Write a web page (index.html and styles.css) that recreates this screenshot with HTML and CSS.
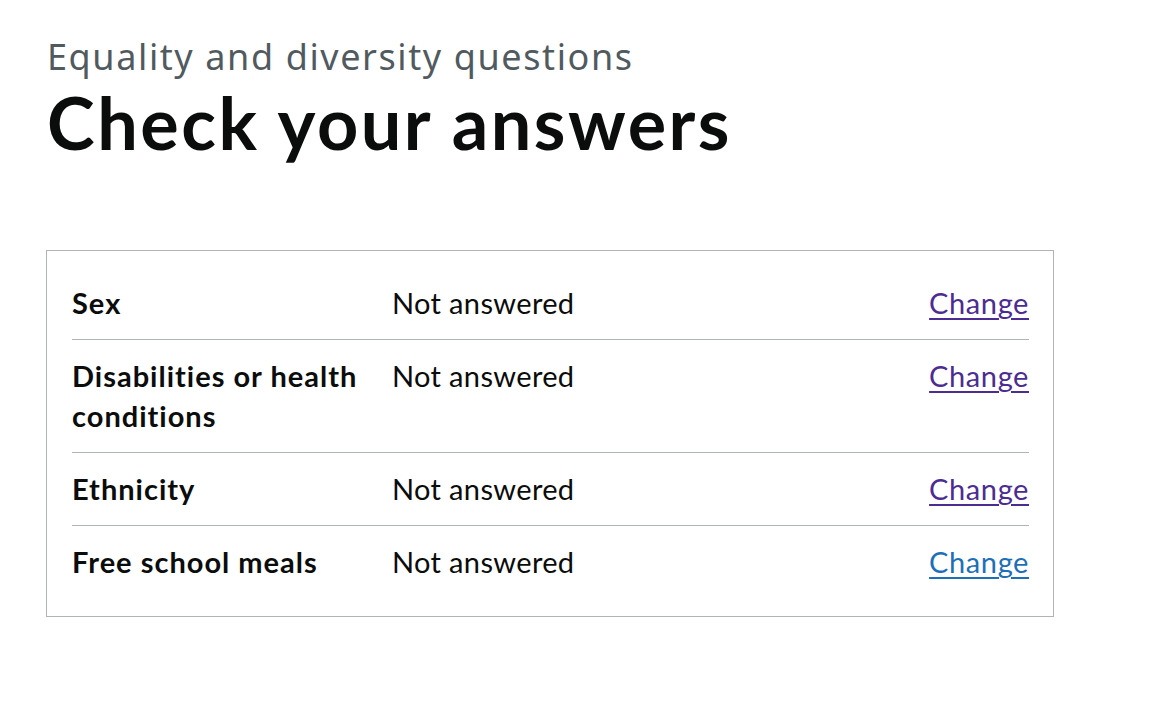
FILE: index.html
```html
<!DOCTYPE html>
<html lang="en">
<head>
<meta charset="utf-8">
<title>Check your answers</title>
<link rel="stylesheet" href="styles.css">
</head>
<body>
<main class="page">
  <span class="caption">Equality and diversity questions</span>
  <h1 class="heading">Check your answers</h1>
  <div class="card">
    <dl class="summary">
      <div class="row">
        <dt class="key">Sex</dt>
        <dd class="value">Not answered</dd>
        <dd class="actions"><a class="link visited" href="#">Change</a></dd>
      </div>
      <div class="row">
        <dt class="key">Disabilities or health conditions</dt>
        <dd class="value">Not answered</dd>
        <dd class="actions"><a class="link visited" href="#">Change</a></dd>
      </div>
      <div class="row">
        <dt class="key">Ethnicity</dt>
        <dd class="value">Not answered</dd>
        <dd class="actions"><a class="link visited" href="#">Change</a></dd>
      </div>
      <div class="row">
        <dt class="key">Free school meals</dt>
        <dd class="value">Not answered</dd>
        <dd class="actions"><a class="link" href="#">Change</a></dd>
      </div>
    </dl>
  </div>
</main>
</body>
</html>
```

FILE: styles.css
```css
html, body {
  margin: 0;
  padding: 0;
  background: #ffffff;
}

body {
  font-family: Lato, "Noto Sans", "Liberation Sans", sans-serif;
  color: #0b0c0c;
}

.page {
  padding: 34px 0 0 47px;
  width: 1007px;
}

.caption {
  display: block;
  font-family: "Noto Sans", Lato, "Liberation Sans", sans-serif;
  font-size: 36px;
  line-height: 45px;
  letter-spacing: 1.6px;
  color: #505a5f;
  font-weight: 400;
}

.heading {
  margin: 3px 0 88px;
  font-size: 72px;
  line-height: 80px;
  font-weight: 700;
  letter-spacing: 2.5px;
  color: #0b0c0c;
}

.card {
  margin-left: -1px;
  border: 1px solid #b1b4b6;
  padding: 16px 24px 18px 25px;
}

.summary {
  margin: 0;
}

.row {
  display: grid;
  grid-template-columns: 300px 1fr auto;
  column-gap: 20px;
  border-bottom: 1px solid #b1b4b6;
  font-size: 29px;
  line-height: 40px;
}

.row:last-child {
  border-bottom: none;
}

.key,
.value,
.actions {
  margin: 0;
  padding: 16px 0;
}

.key {
  font-weight: 700;
  letter-spacing: 1px;
}

.value {
  letter-spacing: 0.35px;
}

.actions {
  text-align: right;
}

.link {
  color: #1d70b8;
  letter-spacing: 0.6px;
  text-decoration: underline;
  text-decoration-thickness: 2px;
  text-underline-offset: 4px;
}

.link.visited {
  color: #4c2c92;
}
```
